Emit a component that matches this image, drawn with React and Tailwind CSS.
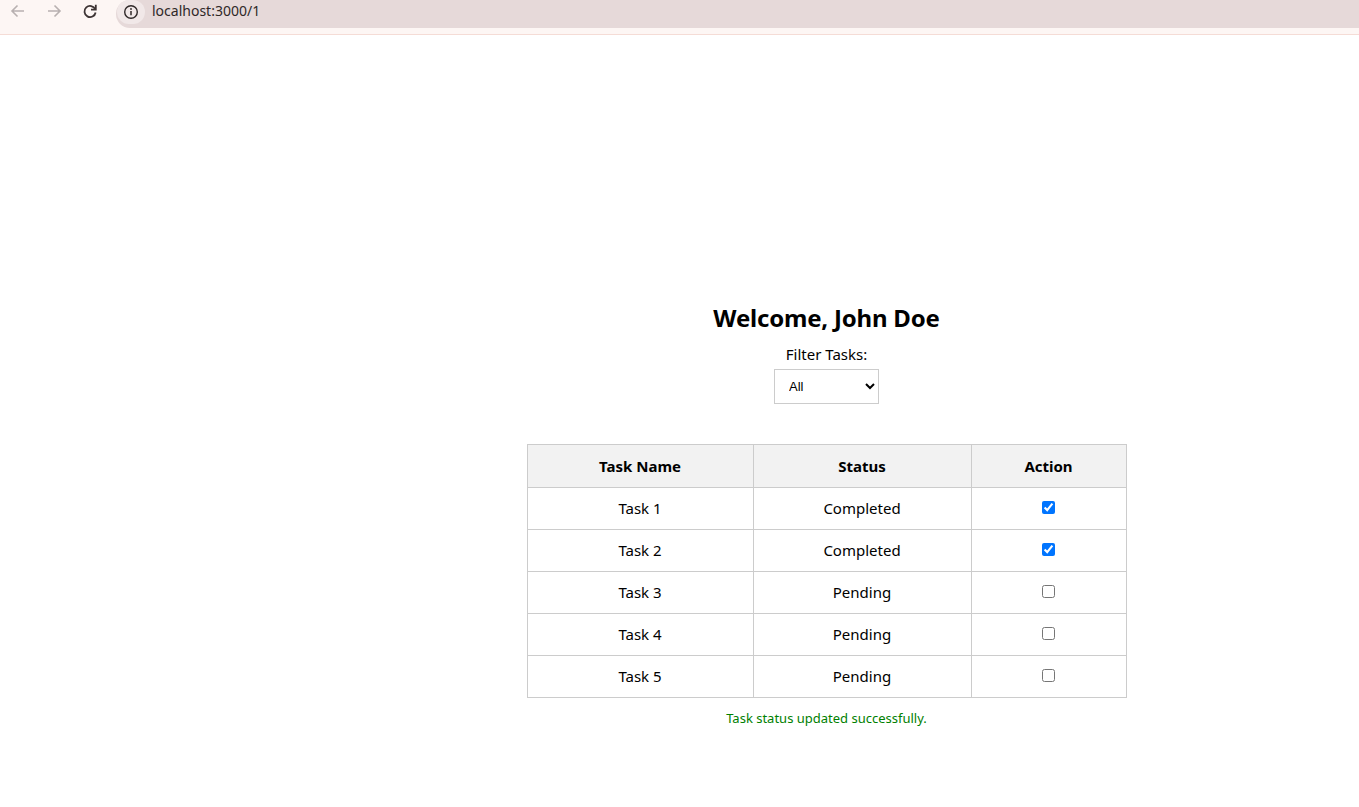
import { useState } from 'react';

const initialTasks = [
  { id: 1, name: 'Task 1', done: true },
  { id: 2, name: 'Task 2', done: true },
  { id: 3, name: 'Task 3', done: false },
  { id: 4, name: 'Task 4', done: false },
  { id: 5, name: 'Task 5', done: false },
];

function BrowserBar() {
  return (
    <div className="h-[35px] bg-[#fdf6f4] border-b border-[#f5dcd6] flex">
      <div className="flex items-start pt-[1px] pl-[8px] gap-[16px] w-[116px] shrink-0">
        <svg width="20" height="20" viewBox="0 0 20 20" className="text-[#b8b0b0]">
          <path d="M16 10H4.5M9.5 4.5L4 10l5.5 5.5" fill="none" stroke="currentColor" strokeWidth="1.6" />
        </svg>
        <svg width="20" height="20" viewBox="0 0 20 20" className="text-[#b8b0b0]">
          <path d="M4 10h11.5M10.5 4.5L16 10l-5.5 5.5" fill="none" stroke="currentColor" strokeWidth="1.6" />
        </svg>
        <svg width="20" height="20" viewBox="0 0 20 20" className="text-[#3d3434]">
          <path d="M15.2 8.2A5.6 5.6 0 1 0 15.6 11.5" fill="none" stroke="currentColor" strokeWidth="1.8" />
          <path d="M15.8 3.8v4.8H11" fill="none" stroke="currentColor" strokeWidth="1.8" />
        </svg>
      </div>
      <div className="flex-1 h-[28px] bg-[#e6d9d9] rounded-l-full flex items-start">
        <div className="w-[28px] h-[24px] rounded-full bg-[#f1e8e8] flex items-center justify-center ml-[1px]">
          <svg width="16" height="16" viewBox="0 0 16 16" className="text-[#2f2828]">
            <circle cx="8" cy="8" r="6.3" fill="none" stroke="currentColor" strokeWidth="1.4" />
            <path d="M8 7v4.2" stroke="currentColor" strokeWidth="1.5" />
            <circle cx="8" cy="5" r="0.9" fill="currentColor" />
          </svg>
        </div>
        <span className="ml-[7px] mt-[1px] text-[14px] leading-[20px] text-[#2f2828] font-['Noto_Sans',sans-serif]">localhost:3000/1</span>
      </div>
    </div>
  );
}

export default function App() {
  const [tasks, setTasks] = useState(initialTasks);
  const [filter, setFilter] = useState('all');
  const [message, setMessage] = useState('Task status updated successfully.');

  const toggle = (id) => {
    setTasks((prev) => prev.map((t) => (t.id === id ? { ...t, done: !t.done } : t)));
    setMessage('Task status updated successfully.');
  };

  const shown = tasks.filter((t) =>
    filter === 'all' ? true : filter === 'completed' ? t.done : !t.done
  );

  return (
    <div className="min-h-screen bg-white font-['Noto_Sans',sans-serif] text-black">
      <BrowserBar />

      <div className="flex">
        {/* invisible left column */}
        <div className="w-[294px] shrink-0" />

        <div className="flex-1 flex flex-col items-center pt-[267px]">
          <h2 className="text-[24px] font-bold leading-[32px] tracking-[-0.2px]">Welcome, John Doe</h2>
          <label className="mt-[10px] text-[15px] leading-[20px]">Filter Tasks:</label>
          <select
            value={filter}
            onChange={(e) => setFilter(e.target.value)}
            className="mt-[5px] w-[105px] h-[35px] border border-[#ccc] bg-white pl-[10px] pr-[8px] text-[13px] font-['Liberation_Sans',sans-serif]"
          >
            <option value="all">All</option>
            <option value="completed">Completed</option>
            <option value="pending">Pending</option>
          </select>

          <table className="mt-[40px] w-[600px] border-collapse text-[15px]">
            <thead>
              <tr className="bg-[#f2f2f2] h-[43px]">
                <th className="w-[226px] border border-[#ccc] font-bold">Task Name</th>
                <th className="w-[218px] border border-[#ccc] font-bold">Status</th>
                <th className="border border-[#ccc] font-bold">Action</th>
              </tr>
            </thead>
            <tbody>
              {shown.map((t) => (
                <tr key={t.id} className="h-[42px]">
                  <td className="border border-[#ccc] text-center">{t.name}</td>
                  <td className="border border-[#ccc] text-center">{t.done ? 'Completed' : 'Pending'}</td>
                  <td className="border border-[#ccc] text-center">
                    <input
                      type="checkbox"
                      checked={t.done}
                      onChange={() => toggle(t.id)}
                      className="w-[13px] h-[13px] align-middle accent-[#0075ff] relative -top-[3px]"
                    />
                  </td>
                </tr>
              ))}
            </tbody>
          </table>

          {message && <p className="mt-[11px] text-[13px] text-[#008000]">{message}</p>}
        </div>
      </div>
    </div>
  );
}
